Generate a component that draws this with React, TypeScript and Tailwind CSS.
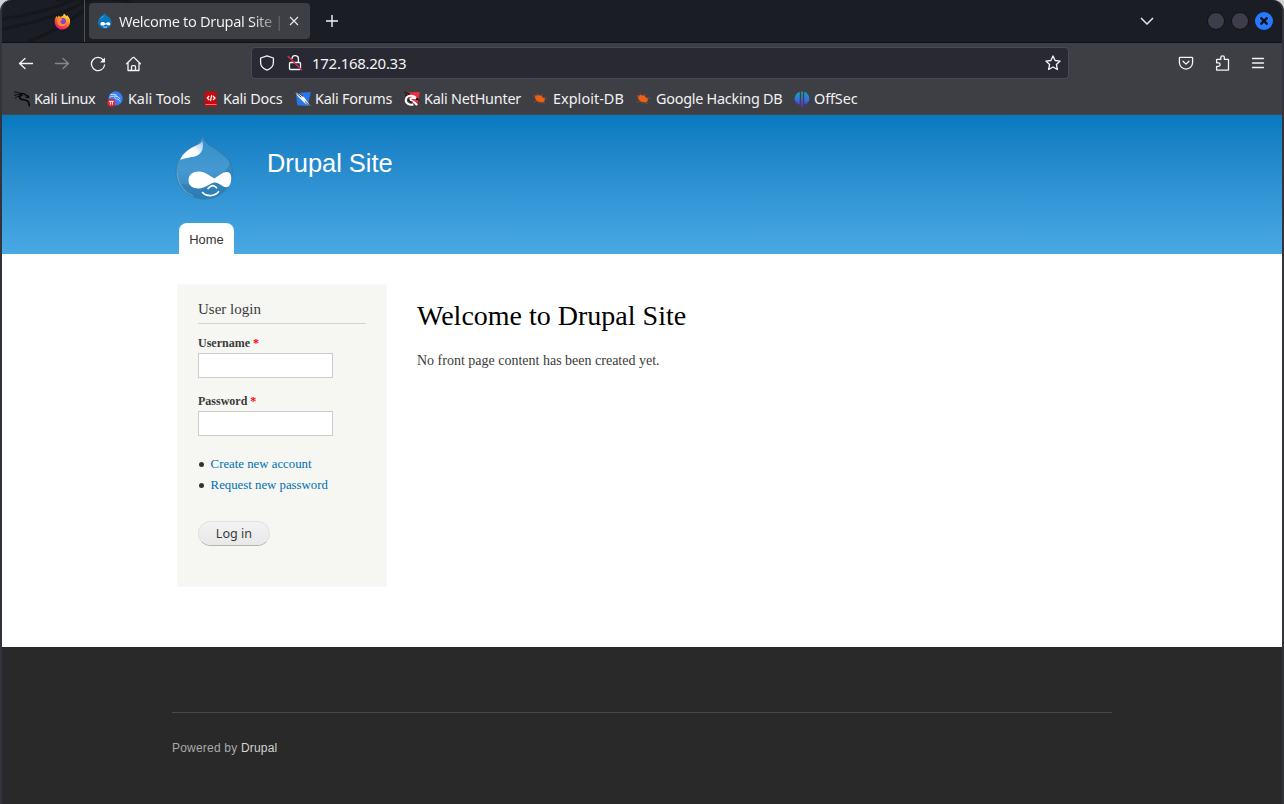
import type { ReactNode } from "react";

function FirefoxIcon() {
  return (
    <svg width="17" height="17" viewBox="0 0 17 17">
      <defs>
        <linearGradient id="fox" x1="0.8" y1="0" x2="0.25" y2="1">
          <stop offset="0" stopColor="#fff44f" />
          <stop offset="0.35" stopColor="#ffa21c" />
          <stop offset="0.7" stopColor="#ff3d49" />
          <stop offset="1" stopColor="#e31587" />
        </linearGradient>
      </defs>
      <path d="M2.4 3.1 3.8 4.4 4.6 2.5 6.2 4 9 2.8 10 .5 12.4 3 13.3 2.3 15.6 5.6C17.5 11 13.8 16.5 8.5 16.5 3.2 16.5.5 12.3.7 8 .8 6 1.8 4.6 2.4 3.1Z" fill="url(#fox)" />
      <circle cx="8.8" cy="8" r="3.1" fill="#8a3ddb" />
      <path d="M4.2 5.2c2.4-.2 3.6.5 4.3 1.7L6.4 8c-.3 3.5 3.7 4.3 5.8 1.7-.3 4-6.6 5-8.4 1.2C3 8.8 3.2 6.6 4.2 5.2Z" fill="#ff9829" />
    </svg>
  );
}

function DrupalFavicon() {
  return (
    <svg width="16" height="16" viewBox="0 0 16 16">
      <path d="M7.6 0c.6 2.3 6.9 4 6.9 9.4 0 3.9-3.2 6.2-6.7 6.2S1 13.100 1 9.300C1 4.700 6.200 3 7.600 0Z" fill="#0877bd" />
      <path d="M6.8 2.4C6 4.600 3.300 4.400 2 7.300 2.800 4.700 5.200 3.700 6.800 2.400Z" fill="#8ed1f3" />
      <path d="M3.5 11c0-2.500 3.200-2.300 5-.6 1.900-1.700 4.800-1.800 4.800.6 0 2.100-2.600 1.500-4.400.3-1.700 1.600-5.400 1.800-5.400-.3Z" fill="#fff" />
      <path d="M6.3 13.700c1.200.8 2.700.8 3.800 0" stroke="#fff" fill="none" strokeWidth=".8" />
    </svg>
  );
}

function BookmarkIcon({ name }: { name: string }) {
  if (name === "linux")
    return (
      <g fill="none" stroke="#050505" strokeLinecap="round" strokeLinejoin="round">
        <path d="M.6.9c2.600.2 4.600.9 6.300 2.100M.4 4.200c2.600-.8 4.800-.7 6.800-.1M1.400 6.800c1.500-1 3.400-1.700 5.300-1.800" strokeWidth=".9" />
        <path d="M5.600 3c2.800-1 4.800-.4 6 1l2.300.8.9 1.500-2.800-.2" strokeWidth="1.3" />
        <path d="M8 4.300C5.300 4.600 4.800 7.300 7 8.200c2 .8 5.200.2 6.800 2 1 1.100 1.400 2.800 1.500 4.600" strokeWidth="1.6" />
      </g>
    );
  if (name === "tools")
    return (
      <>
        <circle cx="8.600" cy="7.400" r="7.100" fill="#347df5" />
        <path d="M3.200 3.800c3-.9 5-.5 6.700.7M2.600 6.200c2.600-.9 5.700-2 8.600-.2l2 2.100M8.200 5.600c-2.600 2.700 4.400 1.600 5 5" fill="none" stroke="#d4e5ff" strokeWidth="1" />
        <circle cx="4.300" cy="11.800" r="4" fill="#e52329" />
        <path d="M2 10.400h4.700M3.400 10.400v3.200M5.400 10.400v3.200" stroke="#fff" fill="none" />
      </>
    );
  if (name === "docs")
    return (
      <>
        <path d="M2.400.5h11.200v15H2.400L1.800 14V2Z" fill="#c9080d" />
        <path d="M2.500 13.500h11" stroke="#ee7777" />
        <path d="m6.200 5-2 2 2 2m3.800-4 2 2-2 2M8.800 4 7.400 10" stroke="#fff" fill="none" strokeWidth="1.2" />
      </>
    );
  if (name === "forums")
    return (
      <>
        <path d="M.8 2.100 15.800 1 12.800 15 2.300 14.300Z" fill="#2677ef" />
        <path d="M.3 1 5.800 3.400l3.600 3.200 2.200 3.200 3.900 5.400-6-3.300-3-3L2.700 5.200Z" fill="#f6f6f6" />
        <path d="m.4 1 5.800 5.200M3 1.600l5 3.800M9.800 10.400l4.800 4.400" stroke="#111" fill="none" strokeWidth=".8" />
      </>
    );
  if (name === "nethunter")
    return (
      <>
        <path d="M2 1.500 15.800 1 13.200 15 8 12Z" fill="#f22d3b" />
        <path d="m.3 1 6 2.400M1 4l5 .4" stroke="#151515" strokeWidth="1.2" />
        <path d="M12 7C9.700 3.400 2.500 4 1.800 8.700c-.5 3.800 4.100 6.100 7.500 4.600M12 7.200c-2-.3-5.600-.7-5.800 1.500 0 1.600 4 .8 6.900 5.400" fill="none" stroke="#fff" strokeWidth="2" />
        <path d="M4.800 8.300c.1 2 2 3 4 2.700M12.500 7l1.800 1.600-2.500-.2" fill="none" stroke="#151515" strokeWidth="1.2" />
      </>
    );
  if (name === "offsec")
    return (
      <>
        <defs>
          <linearGradient id="offsec" x1="0" y1="0" x2="0" y2="1">
            <stop stopColor="#10a8ba" />
            <stop offset=".5" stopColor="#3673d8" />
            <stop offset="1" stopColor="#6520d8" />
          </linearGradient>
        </defs>
        <path d="M5.800.8v13C2.700 12.800.6 10.900.6 7.700S2.700 1.900 5.800.8ZM7.200.5h1.600V16H7.200ZM10.200.8v13c3.100-1 5.200-2.900 5.200-6.100S13.300 1.900 10.200.8Z" fill="url(#offsec)" />
      </>
    );
  return (
    <g transform="translate(-1 0)">
      <path d="m2.800 4.400 2.100.2.5-1.300 1.800 1.300 2-.3 1.600 2.100 2.200 1.400-.6 2.700-2.600 1.200-2.200-1-2.300-.3-2.100-2.600Z" fill="#ec6018" />
      <path d="m1.400 4.900 3 1.300M1.800 11.400l3.400-1.800M4.800 2.300l1.400 2.400M9 4.600l2.200-1.800M11.200 6.700l3.800.4M5.300 10.200l2.700 2.500M9.300 11l3.600 2" stroke="#9c4d28" strokeWidth=".8" />
    </g>
  );
}

const bookmarks = [
  { label: "Kali Linux", icon: "linux", width: "w-[93px] gap-1 tracking-[-0.35px]" },
  { label: "Kali Tools", icon: "tools", width: "w-24 gap-[5px] tracking-[-0.05px]" },
  { label: "Kali Docs", icon: "docs", width: "w-[92px] gap-1 tracking-[-0.2px]" },
  { label: "Kali Forums", icon: "forums", width: "w-[109px] gap-1 tracking-[-0.22px]" },
  { label: "Kali NetHunter", icon: "nethunter", width: "w-[129px] gap-1 tracking-[-0.22px]" },
  { label: "Exploit-DB", icon: "exploit", width: "w-[103px] gap-1 tracking-[0.05px]" },
  { label: "Google Hacking DB", icon: "ghdb", width: "w-[158px] gap-1 tracking-[-0.25px]" },
  { label: "OffSec", icon: "offsec", width: "w-20 gap-1 tracking-[-0.1px]" },
];

function ToolIcon({ children, className = "" }: { children: ReactNode; className?: string }) {
  return (
    <svg width="16" height="16" viewBox="0 0 16 16" fill="none" stroke="#f4f4f5" strokeWidth="1.3" strokeLinecap="round" strokeLinejoin="round" className={`shrink-0 ${className}`}>
      {children}
    </svg>
  );
}

function TitleBar() {
  return (
    <div className="relative flex h-[43px] items-center overflow-hidden rounded-t-[10px] border-b border-[#0e1014] bg-[#1a1d24]">
      <svg className="absolute left-0 top-0" width="140" height="42" fill="none" stroke="#15171d" strokeWidth="3">
        <path d="M0 19C28 15 50 9 72 0M0 29C34 23 65 12 86 0M25 42C48 34 67 22 82 10M54 0c26 0 61-4 76 3" />
      </svg>
      <div className="relative flex h-full w-[83px] items-center border-r border-[#515258] pl-[52px]">
        <FirefoxIcon />
      </div>
      <div className="relative ml-1 flex h-9 w-[221px] items-center rounded bg-[#3e3f44] pl-2">
        <DrupalFavicon />
        <div className="ml-[6px] mt-0.5 w-[170px] whitespace-nowrap bg-linear-to-r from-[#f6f6f6] from-78% to-[#3e3f44] bg-clip-text text-[14.6px] tracking-[-0.34px] text-transparent">
          Welcome to Drupal Site | D
        </div>
        <svg width="10" height="10" viewBox="0 0 10 10" stroke="#ededee" strokeWidth="1.1">
          <path d="m1 1 8 8m0-8L1 9" />
        </svg>
      </div>
      <svg width="12" height="12" className="ml-4" stroke="#f4f4f5" strokeWidth="1.4">
        <path d="M6 0v12M0 6h12" />
      </svg>
      <div className="ml-auto flex items-center">
        <svg width="14" height="8" fill="none" stroke="#e7e7e9" strokeWidth="1.5" className="mr-[53px]">
          <path d="m1 1 6 6 6-6" />
        </svg>
        <div className="mr-[6px] size-[18px] rounded-full border border-[#101116] bg-[#3d3d4c]" />
        <div className="mr-[6px] size-[18px] rounded-full border border-[#101116] bg-[#3d3d4c]" />
        <div className="mr-[9px] flex size-[18px] items-center justify-center rounded-full bg-[#2679fe]">
          <svg width="8" height="8" stroke="#11131a" strokeWidth="2.4">
            <path d="m.5.5 7 7m0-7-7 7" />
          </svg>
        </div>
      </div>
    </div>
  );
}

function Toolbar() {
  return (
    <div className="flex h-[41px] items-center pl-4">
      <ToolIcon><path d="M14.500 7.500H1.500M7 2.500l-5.500 5 5.500 5" /></ToolIcon>
      <ToolIcon className="ml-5 opacity-40"><path d="M1.500 7.500h13m-5.500-5 5.500 5-5.500 5" /></ToolIcon>
      <ToolIcon className="ml-5">
        <path d="M13.200 3.800A6.600 6.600 0 1 0 14.600 9" />
        <path d="M15 1.400v5h-5Z" fill="#f4f4f5" stroke="none" />
      </ToolIcon>
      <ToolIcon className="ml-5">
        <path d="m.6 7.800 6.200-6.200q.7-.6 1.400 0l6.200 6.200M2 6.800v7.700h11V6.800M5.500 14.500v-3.800q0-1 1-1h2q1 0 1 1v3.800" />
      </ToolIcon>
      <div className="-mt-px ml-[109px] flex h-8 w-[818px] items-center rounded border border-[#494a52] bg-[#282933] pl-[7px] pr-[7px]">
        <ToolIcon><path d="M8 .8 14.400 3v4.500c0 3.600-2.800 6.400-6.400 7.700-3.600-1.300-6.400-4.100-6.400-7.700V3Z" /></ToolIcon>
        <ToolIcon className="ml-3">
          <path d="M5 3.500a3.200 3.200 0 0 1 6.400.8V7.500M3.500 7.500h9q1 0 1 1V13.500q0 1-1 1h-9q-1 0-1-1V8.500q0-1 1-1Z" />
          <path d="m1 1.300 13.500 13.500" stroke="#e22850" strokeWidth="1.4" />
        </ToolIcon>
        <span className="ml-[9px] text-[15px] tracking-[-0.28px] text-[#f5f5f6]">172.168.20.33</span>
        <ToolIcon className="ml-auto"><path d="m8 .9 2.100 4.600 5 .6-3.700 3.400 1 5-4.400-2.500-4.400 2.500 1-5L.9 6.100l5-.6Z" /></ToolIcon>
      </div>
      <ToolIcon className="-mt-px ml-[109px]">
        <path d="M2.200 2.300h11.600q.8 0 .8.8v4.400A6.500 6.500 0 0 1 1.400 7.500V3.100q0-.8.8-.8ZM5 6.200l3 2.900 3-2.900" />
      </ToolIcon>
      <ToolIcon className="-mt-px ml-[21px]">
        <path d="M1.600 6.900V4.800q0-.4.4-.4h3.800V2.600a1.800 1.800 0 0 1 3.600 0v1.800h3.700q.4 0 .4.400v10q0 .4-.4.400H2q-.4 0-.4-.4v-3.500h1.800a1.700 1.700 0 0 0 0-3.500H1.600Z" />
      </ToolIcon>
      <ToolIcon className="-mt-px ml-[19px]"><path d="M2.500 3.500h11m-11 4.500h11m-11 4.500h11" /></ToolIcon>
    </div>
  );
}

function BookmarksBar() {
  return (
    <div className="flex h-[31px] items-center border-b border-[#46464b] pl-3 text-[14.4px] text-[#f2f2f3]">
      {bookmarks.map((item) => (
        <div key={item.label} className={`flex shrink-0 items-center whitespace-nowrap ${item.width}`}>
          <svg width="16" height="16" viewBox="0 0 16 16" className="shrink-0"><BookmarkIcon name={item.icon} /></svg>
          <span>{item.label}</span>
        </div>
      ))}
    </div>
  );
}

function DrupalLogo() {
  return (
    <svg width="59" height="66" viewBox="0 0 59 66">
      <defs>
        <linearGradient id="drop" x1="0" y1="0" x2="0" y2="1">
          <stop stopColor="#348fca" />
          <stop offset=".55" stopColor="#4599d0" />
          <stop offset="1" stopColor="#3585bd" />
        </linearGradient>
        <linearGradient id="shine" x1="1" y1="0" x2="0" y2="1">
          <stop stopColor="#8fc4e6" />
          <stop offset=".45" stopColor="#fff" />
          <stop offset="1" stopColor="#fff" />
        </linearGradient>
      </defs>
      <path d="M27.300 0C28.500 5 31.500 8.500 35.500 11c4 2.500 7.500 4.500 11 7.500 7 5 11 11 11 18.500 0 16-12.500 27-28 27S1 52 1 37C1 29 3.500 22 11 16.500 18 11.500 26.500 8.500 27.300 0Z" fill="url(#drop)" stroke="#3478a5" strokeWidth=".8" />
      <path d="M55 27c-1 6-7 12-14 16-9 6-22 8-35 6 5 10 13 14.500 23.500 14.500C46 63.500 57 52 57 37c0-4-1-7-2-10Z" fill="#2373ab" opacity=".45" />
      <path d="M2.200 38c.3 10 6 19 16 23" fill="none" stroke="#80bde0" opacity=".6" />
      <path d="M27.500 6c1.500 7-.5 11.500-4.500 14C18 23 11 22 5.500 25 6 21 10.500 16.500 17 12.500 21.500 10 26 9 27.500 6Z" fill="url(#shine)" />
      <path d="M13.500 45.500c0-6 4.500-9 10.500-9s10 4 15.500 7c4.500-3 8-6.500 12.500-6.500 6 0 5 12 1.500 14.500-4 3-9-4-13.500-4-5 0-9 6-16.500 6-6 0-10-3-10-8Z" fill="#fff" />
      <path d="M27.500 57.500c4 4.500 12 4 16-.8M33 53.500c3.500-4 6.500-3.500 8.500-.7" fill="none" stroke="#fff" strokeWidth="1.600" strokeLinecap="round" />
    </svg>
  );
}

function LoginBlock() {
  return (
    <aside className="h-[303px] w-[210px] border border-[#f9f9f9] bg-[#f6f6f2] px-5 pt-[14px] text-[#3b3b3b]">
      <h2 className="h-[25px] w-[168px] border-b border-[#d3d3d3] text-[15px] leading-[21px]">User login</h2>
      <label className="mt-[10px] block text-xs font-bold leading-[18px]">
        Username <span className="text-[#ff0000]">*</span>
        <input className="mt-px block h-[25px] w-[135px] border border-[#cccccc] bg-white px-1" />
      </label>
      <label className="mt-[14px] block text-xs font-bold leading-[18px]">
        Password <span className="text-[#ff0000]">*</span>
        <input type="password" className="mt-px block h-[25px] w-[135px] border border-[#cccccc] bg-white px-1" />
      </label>
      <ul className="mt-[18px] text-[12.8px] leading-[21px] text-[#0071b3]">
        {["Create new account", "Request new password"].map((link) => (
          <li key={link} className="flex items-center pl-px">
            <span className="mr-[6.600px] size-[5px] rounded-full bg-[#333333]" />
            <a href="#">{link}</a>
          </li>
        ))}
      </ul>
      <button className="mt-[25px] flex h-[25px] w-[72px] items-center justify-center rounded-full border border-[#e1e1e1] border-b-[#b4b4b4] bg-linear-to-b from-[#f3f3f3] to-[#e8e8e8] pt-px font-['Noto_Sans',sans-serif] text-[12.6px] text-[#3a3a3a]">
        Log in
      </button>
    </aside>
  );
}

export default function App() {
  return (
    <div className="h-[804px] w-[1284px] overflow-hidden bg-[#d2d2d3]">
      <div className="flex h-full flex-col rounded-t-[11px] border-x-2 border-[#33343b] bg-[#3e3f44]">
        <div className="font-['Noto_Sans',sans-serif]">
          <TitleBar />
          <Toolbar />
          <BookmarksBar />
        </div>

        {/* Site header */}
        <header className="flex h-[139px] flex-col justify-between bg-linear-to-b from-[#0779bf] to-[#48a9e4] pl-[173px] font-['Liberation_Sans',sans-serif]">
          <div className="flex pt-5">
            <DrupalLogo />
            <span className="ml-[33px] mt-[10px] text-[25.4px] leading-9 text-[#fffeff]">Drupal Site</span>
          </div>
          <nav className="ml-1 flex h-[31px] w-[55px] items-center justify-center rounded-t-lg bg-white pt-[3px] text-[12.9px] text-[#333333]">
            <a href="#">Home</a>
          </nav>
        </header>

        {/* Main content */}
        <main className="flex h-[393px] bg-white pl-[175px] pt-[30px] font-['Liberation_Serif',serif]">
          <LoginBlock />
          <section className="ml-[30px]">
            <h1 className="mt-3 text-[28px] leading-10 text-black">Welcome to Drupal Site</h1>
            <p className="mt-[14px] text-sm leading-[21px] text-[#3b3b3b]">No front page content has been created yet.</p>
          </section>
        </main>

        <footer className="grow bg-[#292929] px-[170px] pt-[65px] font-['Liberation_Sans',sans-serif]">
          <div className="border-t border-[#484848] pt-[26px] text-xs leading-[18px] tracking-[0.2px] text-[#aaaaaa]">
            Powered by <a href="#" className="text-[#d4d4d4]">Drupal</a>
          </div>
        </footer>
      </div>
    </div>
  );
}
